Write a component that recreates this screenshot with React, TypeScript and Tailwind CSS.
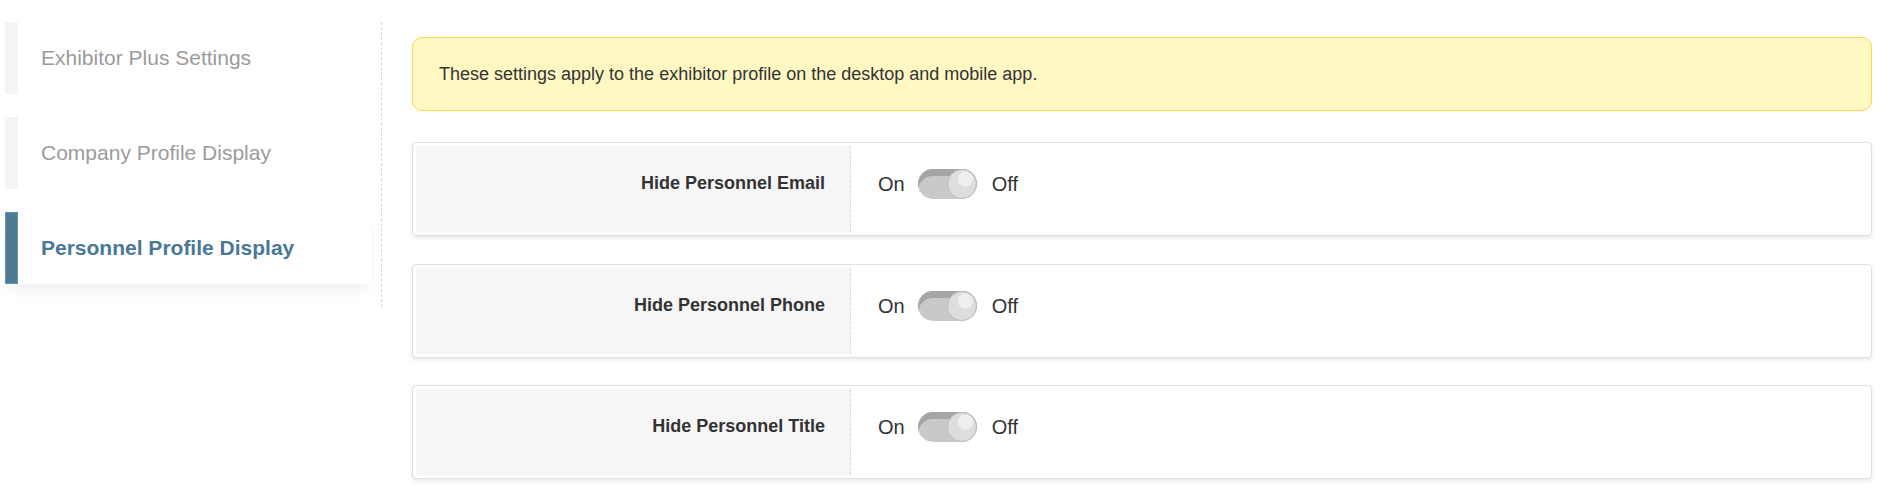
import React from 'react'

const navItems = [
  { label: 'Exhibitor Plus Settings', active: false },
  { label: 'Company Profile Display', active: false },
  { label: 'Personnel Profile Display', active: true },
]

const settings = ['Hide Personnel Email', 'Hide Personnel Phone', 'Hide Personnel Title']

function Toggle() {
  return (
    <div className="relative h-[30px] w-[59px] rounded-full bg-[#c9c9c9] shadow-[inset_0_7px_0_#a5a5a5]">
      <div className="absolute right-0 top-0 h-[30px] w-[30px] rounded-full border border-[#bfbfbf] bg-[radial-gradient(circle_at_62%_32%,#eeeeee_0,#eeeeee_28%,#dddddd_31%)]" />
    </div>
  )
}

function SettingRow({ label }: { label: string }) {
  return (
    <div className="flex h-[94px] rounded-[4px] border border-[#e0e0e0] bg-white pb-[3px] pl-[3px] pt-[3px] shadow-[0_2px_4px_rgba(0,0,0,0.09)]">
      <div className="flex w-[435px] justify-end border-r border-dashed border-[#dcdcdc] bg-[#f6f6f6] pr-[25px] pt-[27px]">
        <span className="text-[18px] font-bold leading-[1.2] text-[#333]">{label}</span>
      </div>
      <div className="flex items-start pl-[27px] pt-[23px]">
        <div className="flex items-center text-[20px] text-[#333]">
          <span>On</span>
          <div className="ml-[13px] mr-[15px]">
            <Toggle />
          </div>
          <span>Off</span>
        </div>
      </div>
    </div>
  )
}

export default function App() {
  return (
    <div className="flex bg-white pt-[22px] font-['Liberation_Sans',Arial,sans-serif]">
      <div className="h-[285px] w-[382px] shrink-0 border-r border-dashed border-[#d6d6d6] pl-[5px] pr-[10px]">
        <div className="flex flex-col gap-[23px]">
          {navItems.map((item) => (
            <div
              key={item.label}
              className={
                item.active
                  ? 'flex h-[72px] items-center bg-white shadow-[0_9px_14px_-4px_rgba(0,0,0,0.07)]'
                  : 'flex h-[72px] items-center'
              }
            >
              <div
                className={
                  item.active
                    ? 'h-full w-[13px] border border-[#6d93ab] bg-[#4e7a96]'
                    : 'h-full w-[13px] bg-[#f5f5f5]'
                }
              />
              <span
                className={
                  item.active
                    ? 'pl-[23px] text-[21px] font-bold text-[#4a7897]'
                    : 'pl-[23px] text-[21px] text-[#9b9b9b]'
                }
              >
                {item.label}
              </span>
            </div>
          ))}
        </div>
      </div>

      <div className="flex-1 pb-[10px] pl-[30px] pr-[19px] pt-[15px]">
        <div className="flex h-[74px] items-center rounded-[10px] border border-[#fbd84c] bg-[#fff8c3] pl-[26px] text-[18px] text-[#333]">
          These settings apply to the exhibitor profile on the desktop and mobile app.
        </div>
        <div className="mt-[31px] flex flex-col gap-[27.5px]">
          {settings.map((s) => (
            <SettingRow key={s} label={s} />
          ))}
        </div>
      </div>
    </div>
  )
}
